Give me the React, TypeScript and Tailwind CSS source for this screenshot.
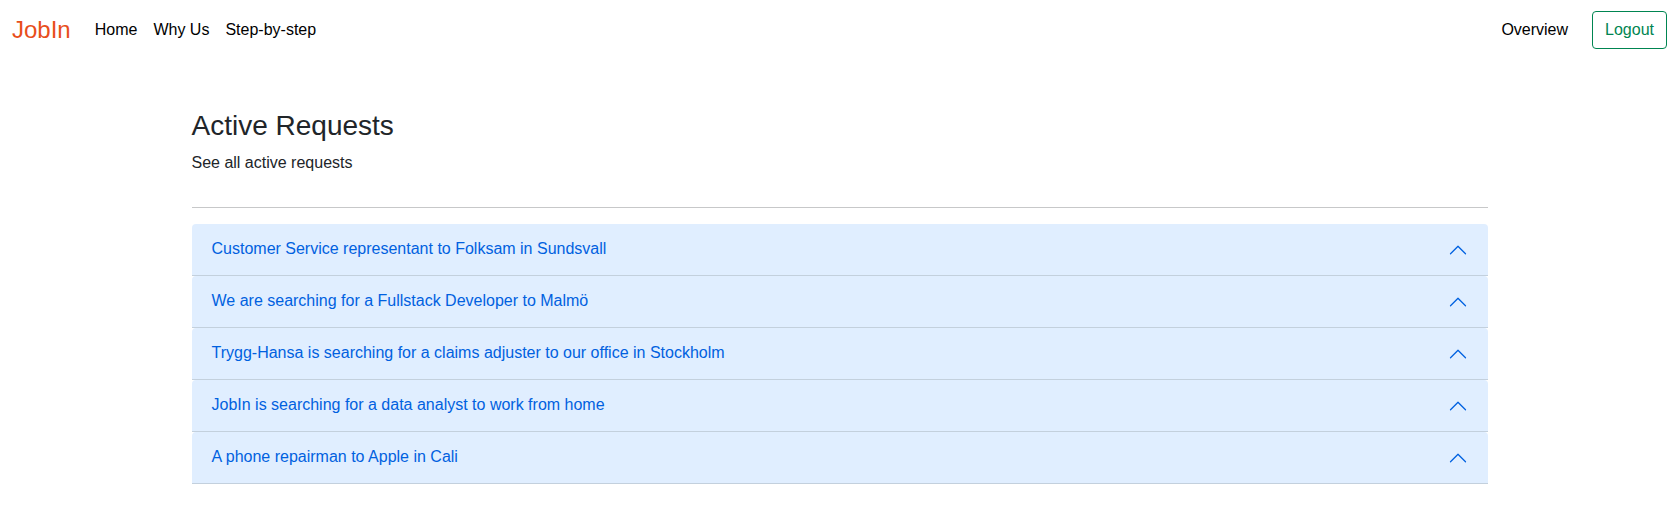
const items = [
  "Customer Service representant to Folksam in Sundsvall",
  "We are searching for a Fullstack Developer to Malmö",
  "Trygg-Hansa is searching for a claims adjuster to our office in Stockholm",
  "JobIn is searching for a data analyst to work from home",
  "A phone repairman to Apple in Cali",
];

export default function App() {
  return (
    <div className="min-h-[524px] bg-white font-['Liberation_Sans',Arial,sans-serif] text-base leading-6 text-[#212529]">
      <nav className="flex h-[60px] items-center px-3 text-black">
        <a className="text-2xl text-[#e84e1b]">JobIn</a>
        <div className="ml-6 flex gap-4">
          <a>Home</a>
          <a>Why Us</a>
          <a>Step-by-step</a>
        </div>
        <div className="ml-auto flex items-center gap-6">
          <a>Overview</a>
          <button className="rounded border border-[#008551] px-3 py-1.5 text-[#008551]">Logout</button>
        </div>
      </nav>
      <main className="mx-auto w-[1296px] pt-[49px]">
        <h2 className="mb-2 text-[28px] leading-[34px]">Active Requests</h2>
        <p>See all active requests</p>
        <hr className="mt-8 mb-4 border-[#c7c8c9]" />
        <div>
          {items.map((t) => (
            <div key={t} className="flex h-[52px] items-center justify-between rounded-t border-b border-[#c3d0dd] bg-[#e0eeff] px-5 text-[#0061e0]">
              <span className="pb-0.5">{t}</span>
              <svg className="size-5" viewBox="0 0 16 16" fill="currentColor">
                <path d="M14.354 11.354a.5.5 0 0 1-.708 0L8 5.707l-5.646 5.647a.5.5 0 0 1-.708-.708l6-6a.5.5 0 0 1 .708 0l6 6a.5.5 0 0 1 0 .708z" />
              </svg>
            </div>
          ))}
        </div>
      </main>
    </div>
  );
}
